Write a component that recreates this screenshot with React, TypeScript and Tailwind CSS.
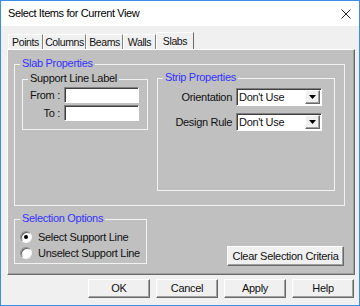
import React from "react";

const raised =
  "bg-[#f0f0f0] border border-t-white border-l-white border-r-[#696969] border-b-[#696969] shadow-[inset_-1px_-1px_0_#a0a0a0]";
const sunken =
  "bg-white border border-t-[#808080] border-l-[#808080] border-r-white border-b-white shadow-[inset_1px_1px_0_#404040]";

function Group({
  label,
  blue,
  className,
  children,
}: {
  label: string;
  blue?: boolean;
  className: string;
  children?: React.ReactNode;
}) {
  return (
    <div className={`relative border border-[#f2f2f2] ${className}`}>
      <span
        className={`absolute -top-[8px] left-[5px] px-[2px] bg-[#c0c0c0] leading-[13px] ${
          blue ? "text-[#3333ff]" : "text-[#111]"
        }`}
      >
        {label}
      </span>
      {children}
    </div>
  );
}

function Select({ value }: { value: string }) {
  return (
    <div className={`w-[86px] h-[18px] flex items-center ${sunken}`}>
      <span className="flex-1 pl-[2px] leading-[13px]">{value}</span>
      <span className={`w-[15px] h-[14px] mr-[1px] flex items-center justify-center ${raised}`}>
        <svg width="7" height="4" viewBox="0 0 7 4">
          <path d="M0 0h7L3.5 4z" fill="#000" />
        </svg>
      </span>
    </div>
  );
}

function Radio({ checked, label }: { checked?: boolean; label: string }) {
  return (
    <div className="flex items-center h-[16px]">
      <span className="w-[12px] h-[12px] rounded-full bg-white border border-t-[#909090] border-l-[#909090] border-r-[#f4f4f4] border-b-[#f4f4f4] shadow-[inset_1px_1px_0_#606060] flex items-center justify-center">
        {checked && <span className="w-[4px] h-[4px] rounded-full bg-black" />}
      </span>
      <span className="ml-[6px] leading-[13px]">{label}</span>
    </div>
  );
}

const tabs = [
  { name: "Points", w: "w-[35px]" },
  { name: "Columns", w: "w-[43px]" },
  { name: "Beams", w: "w-[37px]" },
  { name: "Walls", w: "w-[33px]" },
];

export default function App() {
  return (
    <div className="w-[360px] h-[306px] border border-[#3a8ee6] bg-[#f0f0f0] flex flex-col font-['Liberation_Sans',Arial,sans-serif] text-[11px] tracking-[-0.3px] text-[#111]">
      {/* title bar */}
      <div className="h-[25px] bg-white flex items-center justify-between pl-[7px] pr-[8px]">
        <span className="text-[11px] tracking-[-0.4px] text-black">Select Items for Current View</span>
        <svg width="10" height="10" viewBox="0 0 10 10">
          <path d="M0.5 0.5l9 9M9.5 0.5l-9 9" stroke="#222" strokeWidth="1" />
        </svg>
      </div>

      {/* tabs */}
      <div className="ml-[7px] mt-[6px] flex items-end h-[17px] text-[10.5px] tracking-[-0.4px]">
        {tabs.map((t) => (
          <div
            key={t.name}
            className={`${t.w} h-[15px] flex items-center justify-center bg-[#f0f0f0] border-l border-t border-l-white border-t-white border-r border-r-[#808080] leading-[13px]`}
          >
            {t.name}
          </div>
        ))}
        <div className="w-[38px] h-[17px] flex items-start pt-[2px] justify-center bg-[#f0f0f0] border-l border-t border-l-white border-t-white border-r border-r-[#696969] leading-[13px]">
          Slabs
        </div>
      </div>

      {/* panel */}
      <div className="ml-[6px] w-[348px] h-[226px] bg-[#c0c0c0] border border-t-white border-l-white border-r-[#696969] border-b-[#696969] shadow-[inset_-1px_-1px_0_#a0a0a0] flex flex-col">
        <Group label="Slab Properties" blue className="ml-[6px] mt-[14px] w-[331px] h-[142px] flex items-start">
          <Group label="Support Line Label" className="ml-[7px] mt-[14px] w-[126px] h-[51px]">
            <div className="pt-[7px] flex flex-col gap-[2px]">
              <div className="flex items-center">
                <span className="w-[37px] text-right leading-[13px]">From :</span>
                <div className={`ml-[4px] w-[75px] h-[16px] ${sunken}`} />
              </div>
              <div className="flex items-center">
                <span className="w-[37px] text-right leading-[13px]">To :</span>
                <div className={`ml-[4px] w-[75px] h-[16px] ${sunken}`} />
              </div>
            </div>
          </Group>
          <Group label="Strip Properties" blue className="ml-[9px] mt-[13px] w-[178px] h-[113px]">
            <div className="pt-[9px] flex flex-col gap-[7px]">
              <div className="flex items-center">
                <span className="w-[74px] text-right leading-[13px]">Orientation</span>
                <div className="ml-[4px]">
                  <Select value="Don't Use" />
                </div>
              </div>
              <div className="flex items-center">
                <span className="w-[74px] text-right leading-[13px]">Design Rule</span>
                <div className="ml-[4px]">
                  <Select value="Don't Use" />
                </div>
              </div>
            </div>
          </Group>
        </Group>

        <div className="ml-[6px] mt-[13px] flex items-start">
          <Group label="Selection Options" blue className="w-[133px] h-[45px]">
            <div className="pl-[5px] pt-[9px] flex flex-col">
              <Radio checked label="Select Support Line" />
              <Radio label="Unselect Support Line" />
            </div>
          </Group>
          <button
            className={`ml-[80px] mt-[27px] w-[117px] h-[20px] flex items-center justify-center leading-[13px] ${raised}`}
          >
            Clear Selection Criteria
          </button>
        </div>
      </div>

      {/* bottom buttons */}
      <div className="mt-[4px] pr-[5px] flex justify-end gap-[6px]">
        {["OK", "Cancel", "Apply", "Help"].map((b) => (
          <button
            key={b}
            className={`w-[62px] h-[19px] flex items-center justify-center leading-[13px] ${raised}`}
          >
            {b}
          </button>
        ))}
      </div>
    </div>
  );
}
